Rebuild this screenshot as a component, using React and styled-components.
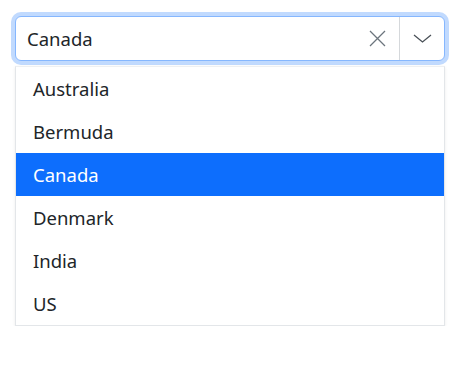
import React from "react";
import styled, { createGlobalStyle } from "styled-components";

const GlobalStyle = createGlobalStyle`
    body {
        margin: 0;
        background: #fff;
        font-family: "Noto Sans", "Open Sans", sans-serif;
        color: #212529;
    }
`;

const Wrapper = styled.div`
    padding: 16px 29px 0 15px;
    width: 430px;
`;

const Control = styled.div`
    display: flex;
    align-items: stretch;
    height: 45px;
    box-sizing: border-box;
    border: 1px solid #86b7fe;
    border-radius: 6px;
    box-shadow: 0 0 0 4px #c1dafe;
    background: #fff;
`;

const Value = styled.div`
    flex: 1;
    display: flex;
    align-items: center;
    padding-left: 11px;
    font-size: 18.5px;
    color: #212529;
`;

const IconButton = styled.div`
    display: flex;
    align-items: center;
    justify-content: center;
    width: ${(props) => props.width}px;
    border-left: ${(props) => (props.divided ? "1px solid #d5d8db" : "none")};
    color: #6c757d;
`;

const Menu = styled.ul`
    list-style: none;
    margin: 5px 0 0;
    padding: 0;
    border: 1px solid #e3e6e9;
    border-top-color: #eef0f2;
    box-shadow: 0 1px 3px rgba(0, 0, 0, 0.08);
    background: #fff;
`;

const Option = styled.li`
    height: 43px;
    display: flex;
    align-items: center;
    padding-left: 17px;
    font-size: 18.5px;
    background: ${(props) => (props.active ? "#0d6efd" : "transparent")};
    color: ${(props) => (props.active ? "#fff" : "#212529")};
`;

const countries = ["Australia", "Bermuda", "Canada", "Denmark", "India", "US"];

const App = () => {
    const selected = "Canada";
    return (
        <Wrapper>
            <GlobalStyle />
            <Control>
                <Value>{selected}</Value>
                <IconButton width={44}>
                    <svg width="17" height="17" viewBox="0 0 17 17">
                        <path
                            d="M1 1 L16 16 M16 1 L1 16"
                            stroke="currentColor"
                            strokeWidth="1.3"
                            fill="none"
                        />
                    </svg>
                </IconButton>
                <IconButton width={44} divided>
                    <svg width="19" height="9" viewBox="0 0 19 9">
                        <path
                            d="M1 1 L9.5 8 L18 1"
                            stroke="#495057"
                            strokeWidth="1.3"
                            fill="none"
                        />
                    </svg>
                </IconButton>
            </Control>
            <Menu>
                {countries.map((name) => (
                    <Option key={name} active={name === selected}>
                        {name}
                    </Option>
                ))}
            </Menu>
        </Wrapper>
    );
};

export default App;
